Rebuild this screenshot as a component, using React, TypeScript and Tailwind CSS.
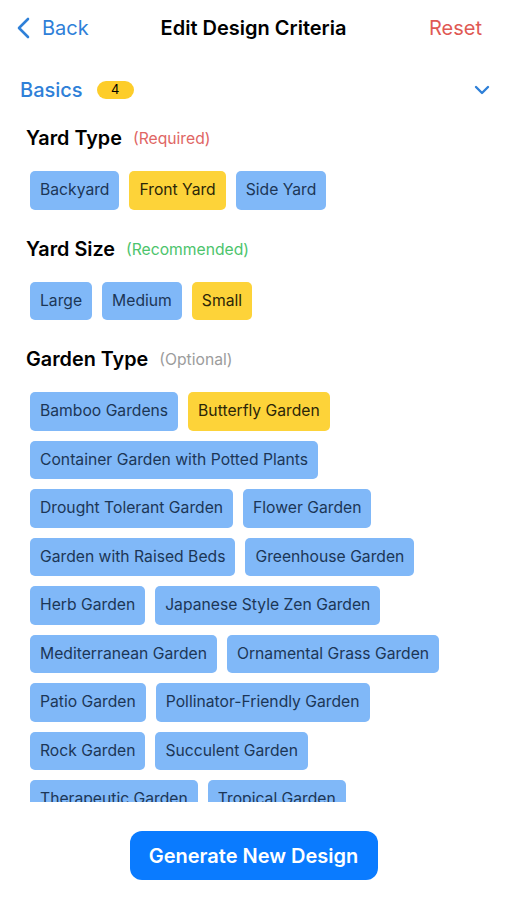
import React from 'react';

const yardTypes = ['Backyard', 'Front Yard', 'Side Yard'];
const yardSizes = ['Large', 'Medium', 'Small'];
const gardenTypes = [
  'Bamboo Gardens',
  'Butterfly Garden',
  'Container Garden with Potted Plants',
  'Drought Tolerant Garden',
  'Flower Garden',
  'Garden with Raised Beds',
  'Greenhouse Garden',
  'Herb Garden',
  'Japanese Style Zen Garden',
  'Mediterranean Garden',
  'Ornamental Grass Garden',
  'Patio Garden',
  'Pollinator-Friendly Garden',
  'Rock Garden',
  'Succulent Garden',
  'Therapeutic Garden',
  'Tropical Garden',
];

function Chip({ label, selected }: { label: string; selected: boolean }) {
  return (
    <button
      className={
        'h-[38.5px] px-[10px] rounded-[5px] text-[15.7px] leading-none ' +
        (selected ? 'bg-[#fdd339] text-[#2b2608]' : 'bg-[#80b8f8] text-[#1c3656]')
      }
    >
      {label}
    </button>
  );
}

function Section({
  title,
  note,
  noteClass,
  options,
  selected,
}: {
  title: string;
  note: string;
  noteClass: string;
  options: string[];
  selected: string;
}) {
  return (
    <div>
      <div className="flex items-center gap-[11px] h-[28px] px-[26px] pt-[2px]">
        <h2 className="text-[19.8px] font-semibold text-black">{title}</h2>
        <span className={'text-[15.7px] ' + noteClass}>{note}</span>
      </div>
      <div className="flex flex-wrap gap-x-[10px] gap-y-[10px] px-[30px] mt-[19px]">
        {options.map((o) => (
          <Chip key={o} label={o} selected={o === selected} />
        ))}
      </div>
    </div>
  );
}

export default function App() {
  return (
    <div
      className="h-[900px] w-full bg-white flex flex-col overflow-hidden"
      style={{ fontFamily: 'Inter, "Noto Sans", sans-serif' }}
    >
      {/* Nav bar */}
      <header className="h-[56px] flex items-center justify-between px-[17px] relative">
        <div className="flex items-center gap-[12px] text-[#2f80d8]">
          <svg width="13" height="22" viewBox="0 0 13 22" fill="none">
            <polyline
              points="11,2 2,11 11,20"
              stroke="#2f80d8"
              strokeWidth="2.6"
              strokeLinecap="round"
              strokeLinejoin="round"
            />
          </svg>
          <span className="text-[20px]">Back</span>
        </div>
        <h1 className="absolute left-1/2 -translate-x-1/2 text-[20px] font-semibold text-black">
          Edit Design Criteria
        </h1>
        <span className="text-[20px] text-[#df5954] pr-[8px]">Reset</span>
      </header>

      {/* Basics row */}
      <div className="h-[40px] mt-[14px] flex items-center justify-between px-[20px]">
        <div className="flex items-center gap-[14px]">
          <span className="text-[20px] font-medium text-[#2f80d8]">Basics</span>
          <span className="w-[37px] h-[18px] rounded-full bg-[#fdcd2a] flex items-center justify-center text-[13px] text-black">
            4
          </span>
        </div>
        <svg width="16" height="10" viewBox="0 0 16 10" fill="none" className="mr-[-3px]">
          <polyline
            points="2,2 8,8 14,2"
            stroke="#2f80d8"
            strokeWidth="2.4"
            strokeLinecap="round"
            strokeLinejoin="round"
          />
        </svg>
      </div>

      {/* Scrolling content */}
      <div className="h-[692px] overflow-hidden pt-[14px] flex flex-col gap-[25px]">
        <Section
          title="Yard Type"
          note="(Required)"
          noteClass="text-[#e06664]"
          options={yardTypes}
          selected="Front Yard"
        />
        <Section
          title="Yard Size"
          note="(Recommended)"
          noteClass="text-[#4cc46c]"
          options={yardSizes}
          selected="Small"
        />
        <Section
          title="Garden Type"
          note="(Optional)"
          noteClass="text-[#9c9c9c]"
          options={gardenTypes}
          selected="Butterfly Garden"
        />
      </div>

      {/* Footer */}
      <div className="flex justify-center pt-[29px]">
        <button className="w-[248px] h-[49px] rounded-[12px] bg-[#0a7bff] text-white text-[20px] font-semibold">
          Generate New Design
        </button>
      </div>
    </div>
  );
}
